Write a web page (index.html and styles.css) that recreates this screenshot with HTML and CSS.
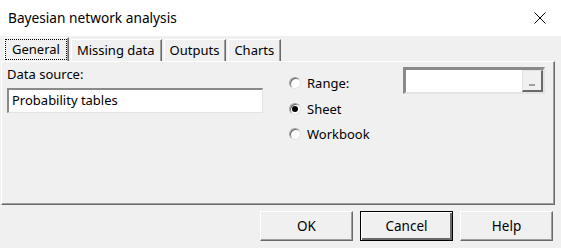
FILE: index.html
```html
<!DOCTYPE html>
<html lang="en">
  <head>
    <meta charset="UTF-8" />
    <title>Bayesian network analysis</title>
    <link rel="stylesheet" href="styles.css">
  </head>
  <body>
    <div class="titlebar">
      <span class="title">Bayesian network analysis</span>
      <svg class="close" width="12" height="12" viewBox="0 0 12 12">
        <path d="M0.5 0.5 L11.5 11.5 M11.5 0.5 L0.5 11.5" stroke="#000" stroke-width="1" fill="none" />
      </svg>
    </div>

    <div class="dialog">
      <div class="tabs">
        <div class="tab active"><span class="focus">General</span></div>
        <div class="tab">Missing data</div>
        <div class="tab">Outputs</div>
        <div class="tab">Charts</div>
      </div>

      <div class="panel">
        <div class="source">
          <label class="caption">Data source:</label>
          <div class="field">Probability tables</div>
        </div>

        <div class="options">
          <div class="option-row range-row">
            <label class="radio"><span class="dot"></span>Range:</label>
            <div class="range-field">
              <span class="pick"><span class="dash"></span></span>
            </div>
          </div>
          <div class="option-row">
            <label class="radio"><span class="dot checked"></span>Sheet</label>
          </div>
          <div class="option-row">
            <label class="radio"><span class="dot"></span>Workbook</label>
          </div>
        </div>
      </div>

      <div class="buttons">
        <button class="btn">OK</button>
        <button class="btn default">Cancel</button>
        <button class="btn">Help</button>
      </div>
    </div>
  </body>
</html>
```

FILE: styles.css
```css
body {
  margin: 0;
  width: 561px;
  height: 248px;
  overflow: hidden;
  font-family: "Noto Sans", "Open Sans", sans-serif;
  font-size: 13px;
  color: #000;
  background-color: #f0f0f0;
}

.titlebar {
  height: 36px;
  background-color: #fff;
  display: flex;
  align-items: center;
  justify-content: space-between;
  padding: 0 15px 2px 8px;
  box-sizing: border-box;
}

.title {
  font-size: 13.7px;
}

.close {
  display: block;
  margin-top: 2px;
}

.dialog {
  padding: 0 6px 0 1px;
}

/* tab strip */

.tabs {
  display: flex;
  align-items: flex-end;
  height: 25px;
  padding-left: 3px;
}

.tab {
  height: 22px;
  box-sizing: border-box;
  padding: 0 6px 0 5px;
  margin-right: 2px;
  line-height: 20px;
  border-top: 1px solid #fff;
  border-left: 1px solid #fff;
  border-right: 1px solid #696969;
  box-shadow: inset -1px 0 #a0a0a0;
}

.tab.active {
  height: 24px;
  padding: 1px 1px 0 0;
  line-height: 19px;
}

.focus {
  display: block;
  border: 1px dotted #000;
  padding: 0 6px;
}

/* panel */

.panel {
  height: 144px;
  box-sizing: border-box;
  display: flex;
  border-top: 1px solid #fff;
  border-left: 1px solid #fff;
  border-right: 1px solid #696969;
  border-bottom: 1px solid #696969;
  box-shadow: inset -1px -1px #a0a0a0;
}

.source {
  width: 256px;
  padding: 3px 0 0 5px;
}

.caption {
  display: block;
  line-height: 18px;
  margin-bottom: 5px;
}

.field {
  height: 25px;
  box-sizing: border-box;
  background-color: #fff;
  border-top: 2px solid #8a8a8a;
  border-left: 2px solid #8a8a8a;
  border-right: 1px solid #e3e3e3;
  border-bottom: 1px solid #e3e3e3;
  padding-left: 3px;
  line-height: 21px;
}

.options {
  margin-left: 26px;
  padding-top: 5px;
}

.option-row {
  height: 25px;
  display: flex;
  align-items: center;
}

.range-row {
  height: 27px;
  align-items: flex-start;
  margin-bottom: 2px;
}

.radio {
  display: flex;
  align-items: center;
  height: 25px;
}

.range-row .radio {
  width: 114px;
  margin-top: 3px;
}

.dot {
  width: 12px;
  height: 12px;
  box-sizing: border-box;
  border-radius: 50%;
  background-color: #fff;
  border: 1px solid;
  border-color: #a0a0a0 #e3e3e3 #e3e3e3 #a0a0a0;
  box-shadow: inset 1px 1px #696969;
  margin-right: 6px;
  position: relative;
}

.dot.checked::after {
  content: "";
  position: absolute;
  left: 2px;
  top: 2px;
  width: 6px;
  height: 6px;
  border-radius: 50%;
  background-color: #000;
}

.range-field {
  width: 142px;
  height: 27px;
  box-sizing: border-box;
  background-color: #fff;
  border-top: 3px solid #8a8a8a;
  border-left: 3px solid #8a8a8a;
  border-right: 2px solid #e3e3e3;
  border-bottom: 2px solid #e3e3e3;
  display: flex;
  justify-content: flex-end;
}

.pick {
  width: 21px;
  height: 22px;
  box-sizing: border-box;
  background-color: #f0f0f0;
  border-top: 1px solid #e3e3e3;
  border-left: 1px solid #e3e3e3;
  border-right: 2px solid #696969;
  border-bottom: 2px solid #696969;
  display: flex;
  align-items: flex-end;
  justify-content: center;
  padding-bottom: 4px;
}

.dash {
  width: 6px;
  height: 2px;
  background-color: #a0a0a0;
}

/* footer buttons */

.buttons {
  display: flex;
  justify-content: flex-end;
  gap: 7px;
  padding: 6px 2px 0 0;
}

.btn {
  width: 93px;
  height: 30px;
  box-sizing: border-box;
  font-family: inherit;
  font-size: 13.5px;
  color: #000;
  background-color: #f0f0f0;
  border-top: 1px solid #fff;
  border-left: 1px solid #fff;
  border-right: 1px solid #696969;
  border-bottom: 1px solid #696969;
  box-shadow: inset -1px -1px #a0a0a0;
  padding: 0;
}

.btn.default {
  border: 1px solid #000;
  box-shadow: inset 1px 1px #fff, inset -2px -2px #696969;
}
```
